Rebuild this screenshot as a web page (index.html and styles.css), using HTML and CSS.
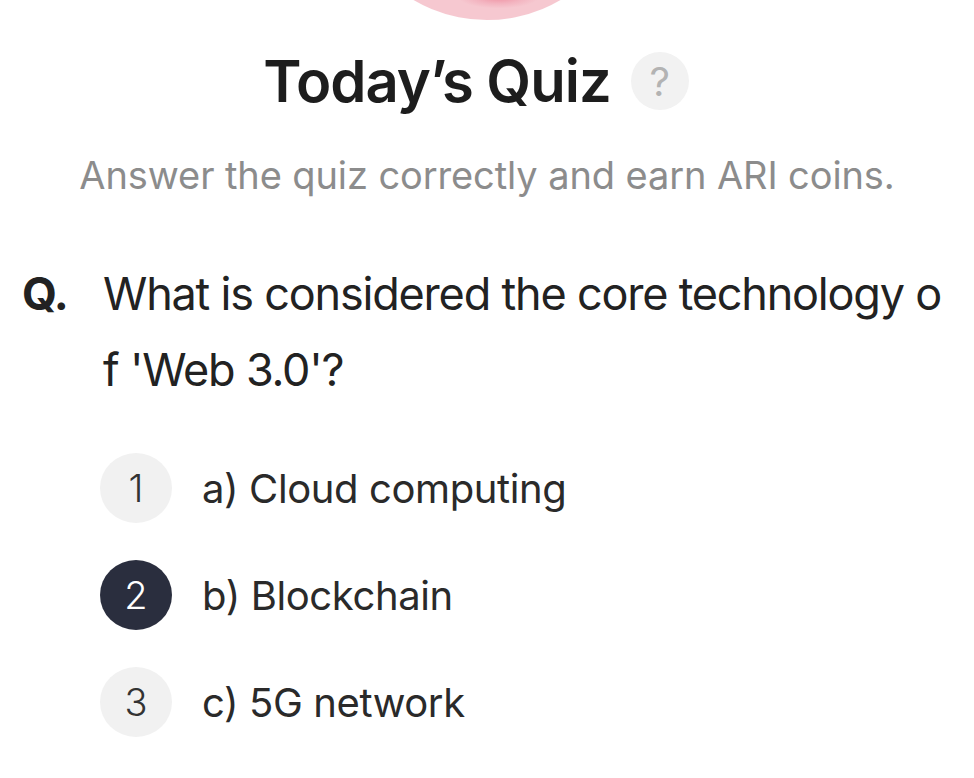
FILE: index.html
```html
<!DOCTYPE html>
<html lang="en">

<head>
    <meta charset="UTF-8">
    <meta name="viewport" content="width=device-width, initial-scale=1.0">
    <title>Today's Quiz</title>
    <link rel="stylesheet" href="styles.css">
</head>

<body>
    <main class="quiz">
        <div class="hero"></div>

        <div class="title-row">
            <h1 class="title">Today’s Quiz</h1>
            <span class="help">?</span>
        </div>
        <p class="subtitle">Answer the quiz correctly and earn ARI coins.</p>

        <div class="question">
            <span class="q-mark">Q.</span>
            <span class="q-text">What is considered the core technology of 'Web 3.0'?</span>
        </div>

        <ul class="options">
            <li class="option">
                <span class="num">1</span>
                <span class="label">a) Cloud computing</span>
            </li>
            <li class="option selected">
                <span class="num">2</span>
                <span class="label">b) Blockchain</span>
            </li>
            <li class="option">
                <span class="num">3</span>
                <span class="label">c) 5G network</span>
            </li>
        </ul>
    </main>
</body>

</html>
```

FILE: styles.css
```css
body {
    margin: 0;
    background: #fff;
    font-family: Inter, "Noto Sans", sans-serif;
    color: #222;
    overflow: hidden;
}

.quiz {
    display: flex;
    flex-direction: column;
}

.hero {
    width: 290px;
    height: 290px;
    margin: -270px auto 0;
    border-radius: 50%;
    background: radial-gradient(ellipse 14% 4% at 54% 92%, #ef8fa0 0%, #f3b4c0 60%, transparent 100%),
        #f6c8d0;
}

.title-row {
    display: flex;
    justify-content: center;
    align-items: center;
    gap: 20px;
    margin-top: 26px;
    padding-right: 22px;
}

.title {
    margin: 0;
    font-size: 58px;
    font-weight: 600;
    letter-spacing: -1px;
    color: #1d1d1d;
}

.help {
    width: 58px;
    height: 58px;
    border-radius: 50%;
    background: #f2f2f2;
    color: #b3b3b3;
    font-size: 40px;
    display: flex;
    align-items: center;
    justify-content: center;
}

.subtitle {
    margin: 36px 0 0;
    text-align: center;
    font-size: 38px;
    font-weight: 400;
    letter-spacing: -0.1px;
    color: #8c8c8c;
}

.question {
    display: flex;
    margin-top: 58px;
    padding: 0 24px 0 22px;
    font-size: 45px;
    line-height: 76px;
    letter-spacing: -1.2px;
    color: #222;
}

.q-mark {
    flex: 0 0 81px;
    font-weight: 700;
}

.q-text {
    word-break: break-all;
}

.options {
    list-style: none;
    margin: 45px 0 0;
    padding: 0 0 0 100px;
    display: flex;
    flex-direction: column;
    gap: 37px;
}

.option {
    display: flex;
    align-items: center;
    gap: 30px;
}

.num {
    width: 72px;
    height: 70px;
    border-radius: 50%;
    background: #f1f1f1;
    color: #333;
    font-size: 38px;
    font-weight: 300;
    display: flex;
    align-items: center;
    justify-content: center;
}

.selected .num {
    background: #2a2e3e;
    color: #fff;
}

.label {
    font-size: 40px;
    letter-spacing: -0.4px;
    color: #2a2a2a;
}
```
